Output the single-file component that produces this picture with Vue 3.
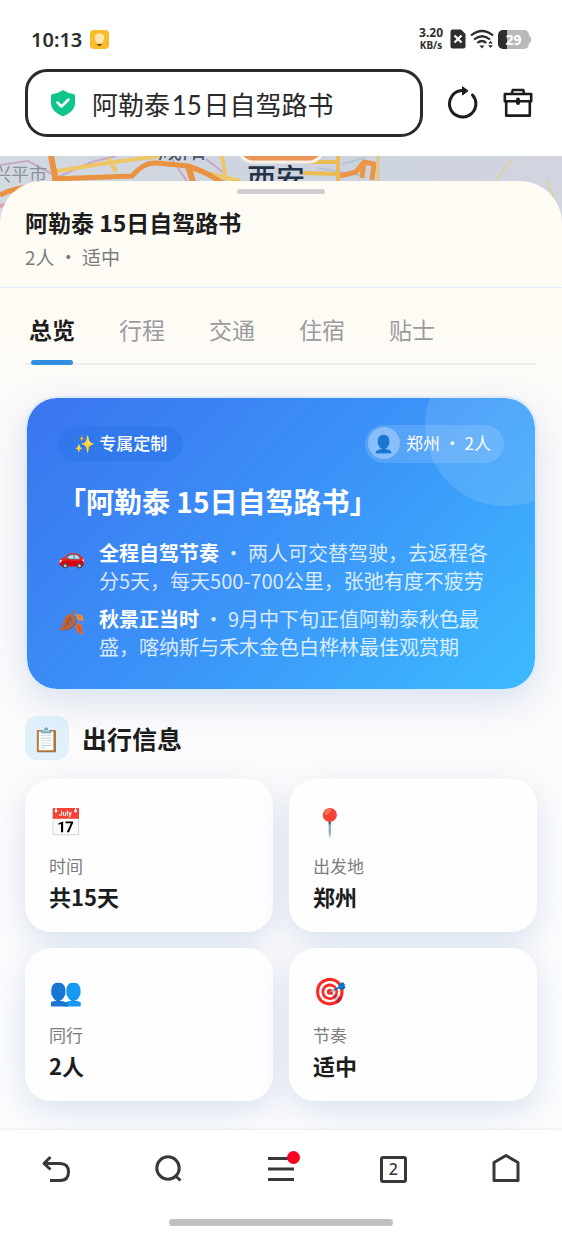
<template>
  <div class="page">
    <header class="browser-top">
      <div class="status-bar">
        <span class="time">10:13</span>
        <svg class="bulb" viewBox="0 0 19 19" aria-hidden="true">
          <rect width="19" height="19" rx="4" fill="#fbbc2c" />
          <circle cx="9.5" cy="8" r="4.8" fill="#ffe7ae" />
          <path d="M6.500 11h6l-1 2.500h-4z" fill="#ffe7ae" />
          <path d="M7 14h5q-.5 2-2.500 2t-2.500-2z" fill="#5c4a1c" />
        </svg>
        <span class="net-speed"><b>3.20</b><b>KB/s</b></span>
        <svg class="sim" viewBox="0 0 16 20" aria-hidden="true">
          <path d="M2.500.500H11l4.500 4.500v12.500q0 2-2 2H2.500q-2 0-2-2v-15q0-2 2-2z" fill="#2e2e2e" />
          <path d="M4.500 6.500l7 7M11.500 6.500l-7 7" stroke="#fff" stroke-width="2.200" />
        </svg>
        <svg class="wifi" viewBox="0 0 24 20" aria-hidden="true">
          <g fill="none" stroke="#2e2e2e" stroke-width="2.200">
            <path d="M1 6.500Q12-2.500 23 6.500" />
            <path d="M4 10.500q8-6.500 16 0" />
            <path d="M7.300 14q4.700-4 9 0" />
          </g>
          <path d="M9.300 16.500h5.200L12 19.500z" fill="#2e2e2e" />
          <path d="M18.200 14.500l2.300-2.700 2.300 2.700zM18.200 16.300h4.600l-2.300 2.700z" fill="#2e2e2e" />
        </svg>
        <span class="battery"><span class="battery-num">29</span></span>
      </div>

      <div class="address-row">
        <label class="address">
          <svg class="shield" viewBox="0 0 26 28" aria-label="安全">
            <path d="M13 1q5 3.500 10.500 4 1.500.3 1.500 2v8q0 7-12 12.500Q1 22 1 15V7q0-1.700 1.500-2Q8 4.500 13 1z" fill="#0fc58c" />
            <path d="M7.500 13.500l4 4 7-7" fill="none" stroke="#fff" stroke-width="2.500" stroke-linecap="round" stroke-linejoin="round" />
          </svg>
          <input v-model="address" type="text" aria-label="地址栏" />
        </label>
        <button class="icon-btn" aria-label="刷新">
          <svg viewBox="0 0 34 34">
            <path d="M27.500 9A13.200 13.200 0 1 1 17 4.600h2" fill="none" stroke="#1c1c1c" stroke-width="3" stroke-linecap="round" />
            <path d="M17.500.800L23 4.800l-5.500 4.200z" fill="#1c1c1c" stroke="#1c1c1c" stroke-linejoin="round" />
          </svg>
        </button>
        <button class="icon-btn" aria-label="工具箱">
          <svg viewBox="0 0 34 34" fill="none" stroke="#1c1c1c" stroke-width="2.600" stroke-linejoin="round">
            <path d="M3.800 8h26.400v7.300H3.800z" />
            <path d="M5.200 15.500V29.600h23.600V15.500" />
            <path d="M10.800 7.500l1-3.500h10.400l1 3.500" />
            <path d="M17 13.500v3.500" stroke-width="4" stroke-linecap="round" />
          </svg>
        </button>
      </div>
    </header>

    <main class="stage">
      <svg class="map" viewBox="0 0 562 75" preserveAspectRatio="xMidYMin slice" aria-hidden="true">
        <defs>
          <linearGradient id="land" x1="0" x2="1">
            <stop offset="0" stop-color="#d3d9e0" />
            <stop offset=".6" stop-color="#ccd3df" />
            <stop offset="1" stop-color="#d2d5e0" />
          </linearGradient>
        </defs>
        <rect width="562" height="75" fill="url(#land)" />
        <g fill="none" stroke-linejoin="round">
          <path d="M0 9l28-4 30 16 34-15 24-6" stroke="#c7a8c8" stroke-width="2" />
          <path d="M170 0l20 30M206 3l18 14" stroke="#c7a8c8" stroke-width="2" />
          <path d="M0 50l14-3" stroke="#dba3ae" stroke-width="4" />
          <path d="M52 16l55-9 52-7M109 2l7 14M222 0l4 24M190 13q24 6 50 12" stroke="#efc666" stroke-width="4" />
          <path d="M0 39q16-8 32-8M52 23l80-3q12-14 24-13t32 3q16 5 28 13t30 4" stroke="#e99342" stroke-width="5" />
          <path d="M51 0l5 25M188 10l5 16" stroke="#e99342" stroke-width="6" />
          <path d="M342 8l22-6M318 12l46 8" stroke="#b4c3d6" stroke-width="2" />
          <path d="M306 6h34M303 17l37 1M338 0v25" stroke="#ebbc55" stroke-width="4" />
          <path d="M340 20l16-4 8-10 10 2-2 16M364 6l-2 16" stroke="#ea9548" stroke-width="5" />
          <path d="M378 0v25" stroke="#e3c67f" stroke-width="3" />
          <path d="M495 25l18-22M546 24l8 18" stroke="#dbd2a4" stroke-width="2" />
        </g>
        <rect x="239" y="-24" width="84" height="30" rx="14" fill="#ea9659" stroke="#f7f0ea" stroke-width="3" />
        <text class="map-town" x="-7" y="25">兴平市</text>
        <text class="map-city" x="158" y="2">咸阳</text>
        <text class="map-big" x="247" y="34">西安</text>
      </svg>

      <section class="sheet">
        <header class="sheet-head">
          <div class="handle"></div>
          <h1>阿勒泰 15日自驾路书</h1>
          <p>2人 ・ 适中</p>
        </header>

        <div class="sheet-body">
          <nav class="tabs" role="tablist">
            <button
              v-for="tab in tabs"
              :key="tab"
              role="tab"
              :aria-selected="tab === activeTab"
              :class="{ active: tab === activeTab }"
              @click="activeTab = tab"
            >{{ tab }}</button>
          </nav>

          <article class="hero">
            <div class="hero-circle"></div>
            <div class="hero-top">
              <span class="badge"><span>✨</span>专属定制</span>
              <span class="user-pill"><span class="avatar">👤</span>郑州 ・ 2人</span>
            </div>
            <h2>「阿勒泰 15日自驾路书」</h2>
            <ul>
              <li v-for="item in highlights" :key="item.title">
                <span class="hl-icon">{{ item.icon }}</span>
                <p><b>{{ item.title }}</b> ・ {{ item.text }}</p>
              </li>
            </ul>
          </article>

          <h3 class="section-title"><span class="section-icon">📋</span>出行信息</h3>

          <div class="info-grid">
            <div v-for="info in infos" :key="info.label" class="info-card">
              <span class="info-icon">{{ info.icon }}</span>
              <span class="info-label">{{ info.label }}</span>
              <b class="info-value">{{ info.value }}</b>
            </div>
          </div>
        </div>
      </section>
    </main>

    <footer class="browser-bottom">
      <nav class="nav-row">
        <button aria-label="返回">
          <svg viewBox="0 0 32 32">
            <path d="M10.500 4L4 10.500l6.500 6M4.500 10.500H20q8.500 0 8.500 8.500T20 27.500H10" />
          </svg>
        </button>
        <button aria-label="搜索">
          <svg viewBox="0 0 32 32">
            <circle cx="15" cy="15" r="11.200" />
            <path d="M22 22.500l5.500 5" />
          </svg>
        </button>
        <button aria-label="菜单">
          <svg viewBox="0 0 32 32">
            <path d="M3 5.500h26M3 16h26M3 26.500h26" />
          </svg>
          <span class="dot"></span>
        </button>
        <button class="windows" aria-label="窗口">
          <span>2</span>
        </button>
        <button aria-label="主页">
          <svg viewBox="0 0 32 32">
            <path d="M16 2.500l12 7V27.500H4V9.500z" />
          </svg>
        </button>
      </nav>
      <div class="home-bar"></div>
    </footer>
  </div>
</template>

<script setup>
import { ref } from 'vue'

// 数字两侧用细空格
const address = ref('阿勒泰\u200a15\u200a日自驾路书')

const tabs = ['总览', '行程', '交通', '住宿', '贴士']
const activeTab = ref('总览')

const highlights = [
  { icon: '🚗', title: '全程自驾节奏', text: '两人可交替驾驶，去返程各分5天，每天500-700公里，张弛有度不疲劳' },
  { icon: '🍂', title: '秋景正当时', text: '9月中下旬正值阿勒泰秋色最盛，喀纳斯与禾木金色白桦林最佳观赏期' },
]

const infos = [
  { icon: '📅', label: '时间', value: '共15天' },
  { icon: '📍', label: '出发地', value: '郑州' },
  { icon: '👥', label: '同行', value: '2人' },
  { icon: '🎯', label: '节奏', value: '适中' },
]
</script>

<style>
body {
  background: #fff;
}
</style>

<style scoped>
.page {
  display: flex;
  flex-direction: column;
  min-height: 100vh;
  font-family: "Noto Sans CJK SC", "Noto Color Emoji", sans-serif;
  color: #1d1d1d;
}
* {
  box-sizing: border-box;
}
h1, h2, h3, p, ul {
  margin: 0;
  padding: 0;
}
button {
  padding: 0;
  border: 0;
  background: none;
  font-family: inherit;
  color: inherit;
}

/* 浏览器顶部 */
.browser-top {
  padding: 24px 27px 19px 25px;
  background: #fff;
}
.status-bar {
  display: flex;
  align-items: center;
  height: 30px;
  padding: 0 6px;
}
.time {
  font: 600 20px "Noto Sans", sans-serif;
  color: #2e2e2e;
}
.bulb {
  width: 19px;
  height: 19px;
  margin-left: 8px;
}
.net-speed {
  display: flex;
  flex-direction: column;
  margin-left: auto;
  font: 10px/12px "Noto Sans", sans-serif;
  text-align: center;
  color: #2e2e2e;
}
.net-speed b:first-child {
  font-size: 12px;
}
.sim {
  width: 16px;
  height: 20px;
  margin-left: 7px;
}
.wifi {
  width: 24px;
  height: 20px;
  margin-left: 4px;
}
.battery {
  position: relative;
  display: flex;
  align-items: center;
  justify-content: center;
  width: 31px;
  height: 19px;
  margin-left: 4px;
  border-radius: 5px;
  background: linear-gradient(90deg, #2e2e2e 29%, #b9b9b9 29%);
}
.battery::after {
  content: "";
  position: absolute;
  top: 6px;
  right: -2px;
  width: 2px;
  height: 7px;
  border-radius: 0 2px 2px 0;
  background: #b9b9b9;
}
.battery-num {
  font: 700 14px/19px "Noto Sans", sans-serif;
  color: #fff;
}
.address-row {
  display: flex;
  align-items: center;
  gap: 22px;
  margin-top: 15px;
}
.address {
  display: flex;
  flex: 1;
  align-items: center;
  gap: 16px;
  height: 68px;
  min-width: 0;
  padding: 0 22px;
  border: 3px solid #2a2a2a;
  border-radius: 22px;
}
.shield {
  flex: none;
  width: 26px;
  height: 28px;
}
.address input {
  flex: 1;
  min-width: 0;
  padding: 0;
  border: 0;
  outline: 0;
  background: none;
  font: 26px "Lato", "Noto Sans CJK SC", sans-serif;
  color: #2a2a2a;
}
.icon-btn {
  width: 34px;
  height: 34px;
}
.icon-btn svg {
  display: block;
}

/* 地图与面板 */
.stage {
  position: relative;
  display: flex;
  flex: 1;
  flex-direction: column;
  padding-top: 25px;
}
.map {
  position: absolute;
  top: 0;
  left: 0;
  width: 100%;
  height: 75px;
}
.map-town {
  font-size: 18px;
  fill: #8b929c;
}
.map-city {
  font-size: 24px;
  fill: #4a5462;
}
.map-big {
  font-size: 29px;
  font-weight: 500;
  fill: #253348;
}
.sheet {
  position: relative;
  flex: 1;
  border-radius: 42px 42px 0 0;
  background: linear-gradient(#fffcf5, #fefbf4 140px, #fcfbfa 230px, #fbfcfd);
  overflow: hidden;
}
.sheet-head {
  padding: 8px 25px 17px;
  border-bottom: 1px solid #e3eef6;
}
.handle {
  width: 88px;
  height: 5px;
  margin: 0 auto 12px;
  border-radius: 3px;
  background: #cfcfd1;
}
.sheet-head h1 {
  font-size: 23px;
  line-height: 32px;
}
.sheet-head p {
  margin-top: 5px;
  font-size: 19px;
  line-height: 27px;
  color: #7c7c7c;
}
.sheet-body {
  padding: 0 25px 29px;
}
.tabs {
  display: flex;
  gap: 36px;
  border-bottom: 2px solid #efeeec;
}
.tabs button {
  position: relative;
  padding: 25px 4px 18px;
  font-size: 23px;
  line-height: 32px;
  color: #9b9a9e;
}
.tabs .active {
  font-weight: 700;
  color: #1d1d1d;
}
.tabs .active::after {
  content: "";
  position: absolute;
  right: 6px;
  bottom: -2px;
  left: 6px;
  height: 5px;
  border-radius: 3px;
  background: #2f8fe0;
}

/* 概览卡片 */
.hero {
  position: relative;
  margin-top: 31px;
  padding: 27px 31px 28px;
  border: 2px solid #dcebf9;
  border-radius: 32px;
  background: linear-gradient(135deg, #3a74ee, #3b93f8 50%, #3dbbff) padding-box;
  box-shadow: 0 12px 36px rgba(80, 120, 200, 0.2);
  color: #fff;
  overflow: hidden;
}
.hero-circle {
  position: absolute;
  top: -52px;
  right: -50px;
  width: 160px;
  height: 160px;
  border-radius: 50%;
  background: rgba(255, 255, 255, 0.12);
}
.hero-top {
  position: relative;
  display: flex;
  align-items: center;
  justify-content: space-between;
  height: 38px;
  font-size: 17px;
  line-height: 24px;
}
.badge {
  display: flex;
  align-items: center;
  gap: 4px;
  height: 34px;
  padding: 0 16px 2px;
  border-radius: 17px;
  background: rgba(30, 110, 230, 0.3);
  font-weight: 500;
}
.user-pill {
  display: flex;
  align-items: center;
  gap: 6px;
  height: 38px;
  padding: 0 13px 2px 3px;
  border-radius: 19px;
  background: rgba(255, 255, 255, 0.14);
}
.avatar {
  display: flex;
  align-items: center;
  justify-content: center;
  width: 32px;
  height: 32px;
  border-radius: 50%;
  background: rgba(255, 255, 255, 0.3);
}
.hero h2 {
  margin: 18px 0;
  font-size: 28px;
  line-height: 40px;
}
.hero ul {
  display: flex;
  flex-direction: column;
  gap: 10px;
  list-style: none;
}
.hero li {
  display: flex;
  gap: 14px;
  font-size: 20px;
  line-height: 28px;
}
.hl-icon {
  flex: none;
  width: 27px;
  padding-top: 1px;
  font-size: 22px;
}
.hero li p {
  color: rgba(255, 255, 255, 0.82);
}
.hero li b {
  color: #fff;
}

/* 出行信息 */
.section-title {
  display: flex;
  align-items: center;
  gap: 13px;
  margin: 25px 0 19px;
  font-size: 25px;
  line-height: 44px;
}
.section-icon {
  display: flex;
  align-items: center;
  justify-content: center;
  width: 44px;
  height: 44px;
  border-radius: 12px;
  background: #e1f1fc;
  font-size: 23px;
  font-weight: 400;
}
.info-grid {
  display: grid;
  grid-template-columns: 1fr 1fr;
  gap: 16px;
}
.info-card {
  display: flex;
  flex-direction: column;
  padding: 24px 24px 21px;
  border-radius: 26px;
  background: #fefeff;
  box-shadow: 0 10px 32px rgba(85, 120, 190, 0.2);
}
.info-icon {
  font-size: 27px;
  line-height: 36px;
}
.info-label {
  margin-top: 15px;
  font-size: 17px;
  line-height: 24px;
  color: #7c7c7c;
}
.info-value {
  margin-top: 3px;
  font-size: 22px;
  line-height: 30px;
}

/* 浏览器底部 */
.browser-bottom {
  position: relative;
  padding: 23px 0 10px;
  background: #fff;
  box-shadow: 0 -1px 3px rgba(0, 0, 0, 0.07);
}
.nav-row {
  display: flex;
}
.nav-row button {
  position: relative;
  display: flex;
  flex: 1;
  align-items: center;
  justify-content: center;
  height: 32px;
}
.nav-row svg {
  width: 32px;
  height: 32px;
  fill: none;
  stroke: #383838;
  stroke-width: 3;
  stroke-linejoin: round;
}
.dot {
  position: absolute;
  top: -2px;
  left: 50%;
  width: 13px;
  height: 13px;
  margin-left: 6px;
  border-radius: 50%;
  background: #f90022;
}
.windows span {
  width: 27px;
  height: 27px;
  border: 3px solid #383838;
  border-radius: 3px;
  font: 500 16px/21px "Noto Sans", sans-serif;
  text-align: center;
  color: #383838;
}
.home-bar {
  width: 40%;
  height: 7px;
  margin: 34px auto 0;
  border-radius: 4px;
  background: #c1c1c1;
}
</style>
